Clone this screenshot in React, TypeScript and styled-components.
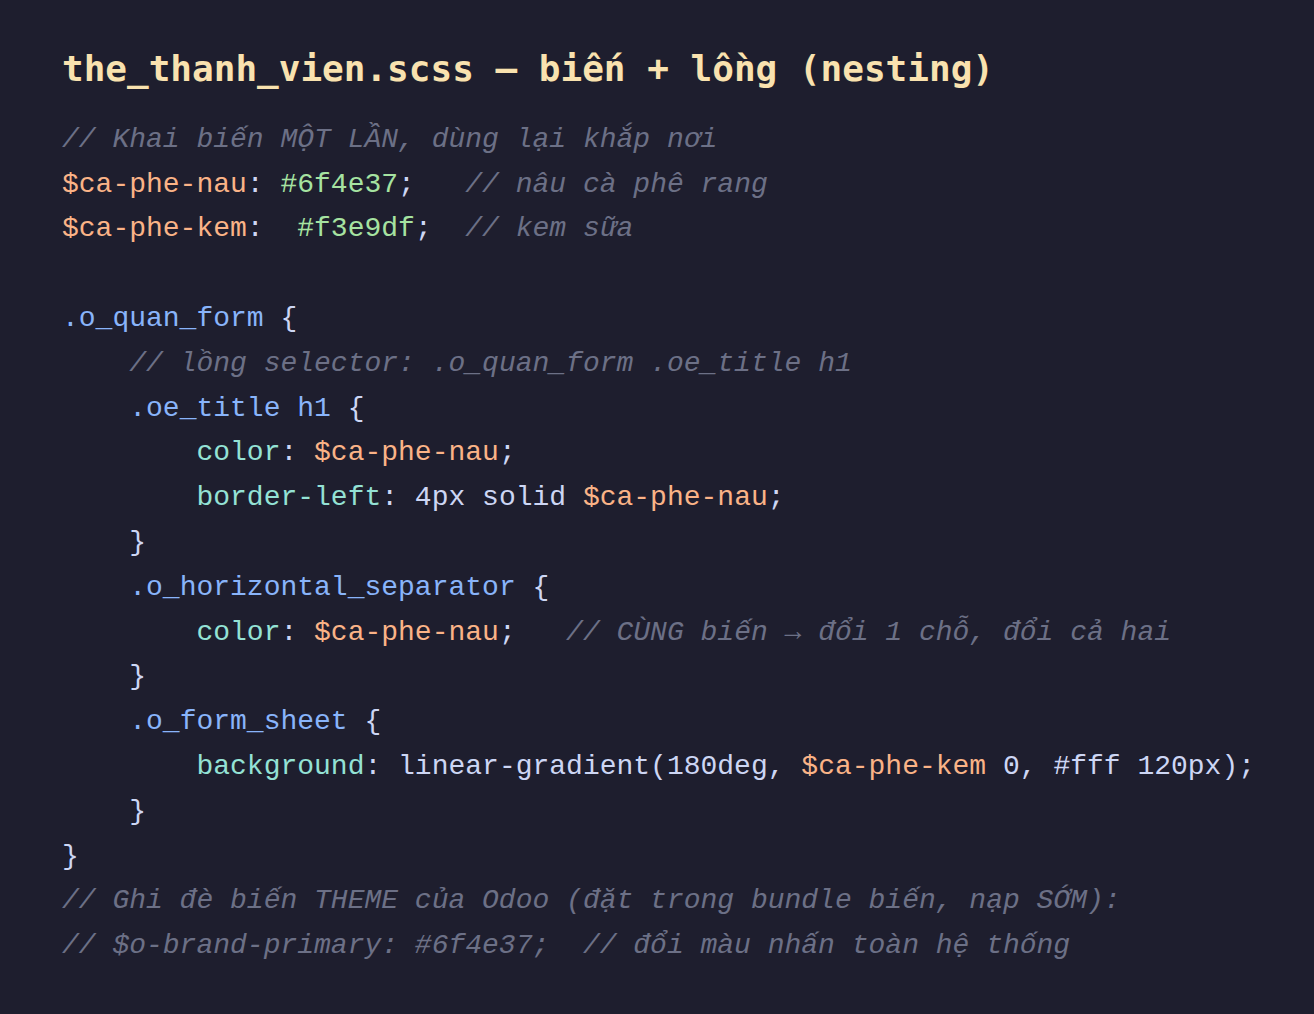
import React from "react";
import styled, { createGlobalStyle } from "styled-components";

const GlobalStyle = createGlobalStyle`
  html, body {
    margin: 0;
    padding: 0;
    background: #1e1e2e;
  }
  body {
    min-height: 1014px;
  }
`;

const Page = styled.main`
  box-sizing: border-box;
  min-height: 1014px;
  background: #1e1e2e;
  padding: 46px 62px 40px 62px;
`;

const Title = styled.h1`
  margin: 0 0 25px 0;
  font-family: "DejaVu Sans Mono", "Liberation Mono", monospace;
  font-weight: 700;
  font-size: 36px;
  line-height: 46.8px;
  color: #f9e2af;
  white-space: pre;
`;

const Code = styled.pre`
  margin: 0;
  font-family: "Courier New", "Nimbus Mono PS", "Nimbus Mono L", "FreeMono", "Liberation Mono", monospace;
  font-size: 28px;
  line-height: 44.8px;
  color: #cdd6f4;
  white-space: pre;
`;

const Line = styled.div`
  height: 44.8px;
`;

type Kind = "plain" | "comment" | "var" | "hex" | "sel" | "prop";

const colors: Record<Kind, string> = {
  plain: "#cdd6f4",
  comment: "#6c7086",
  var: "#fab387",
  hex: "#a6e3a1",
  sel: "#89b4fa",
  prop: "#94e2d5",
};

const Tok = styled.span<{ $kind: Kind }>`
  color: ${(p) => colors[p.$kind]};
  font-style: ${(p) => (p.$kind === "comment" ? "italic" : "normal")};
`;

type Seg = [Kind, string];

const lines: Seg[][] = [
  [["comment", "// Khai biến MỘT LẦN, dùng lại khắp nơi"]],
  [
    ["var", "$ca-phe-nau"],
    ["plain", ": "],
    ["hex", "#6f4e37"],
    ["plain", ";   "],
    ["comment", "// nâu cà phê rang"],
  ],
  [
    ["var", "$ca-phe-kem"],
    ["plain", ":  "],
    ["hex", "#f3e9df"],
    ["plain", ";  "],
    ["comment", "// kem sữa"],
  ],
  [],
  [
    ["sel", ".o_quan_form"],
    ["plain", " {"],
  ],
  [
    ["plain", "    "],
    ["comment", "// lồng selector: .o_quan_form .oe_title h1"],
  ],
  [
    ["plain", "    "],
    ["sel", ".oe_title h1"],
    ["plain", " {"],
  ],
  [
    ["plain", "        "],
    ["prop", "color"],
    ["plain", ": "],
    ["var", "$ca-phe-nau"],
    ["plain", ";"],
  ],
  [
    ["plain", "        "],
    ["prop", "border-left"],
    ["plain", ": 4px solid "],
    ["var", "$ca-phe-nau"],
    ["plain", ";"],
  ],
  [["plain", "    }"]],
  [
    ["plain", "    "],
    ["sel", ".o_horizontal_separator"],
    ["plain", " {"],
  ],
  [
    ["plain", "        "],
    ["prop", "color"],
    ["plain", ": "],
    ["var", "$ca-phe-nau"],
    ["plain", ";   "],
    ["comment", "// CÙNG biến → đổi 1 chỗ, đổi cả hai"],
  ],
  [["plain", "    }"]],
  [
    ["plain", "    "],
    ["sel", ".o_form_sheet"],
    ["plain", " {"],
  ],
  [
    ["plain", "        "],
    ["prop", "background"],
    ["plain", ": linear-gradient(180deg, "],
    ["var", "$ca-phe-kem"],
    ["plain", " 0, #fff 120px);"],
  ],
  [["plain", "    }"]],
  [["plain", "}"]],
  [["comment", "// Ghi đè biến THEME của Odoo (đặt trong bundle biến, nạp SỚM):"]],
  [["comment", "// $o-brand-primary: #6f4e37;  // đổi màu nhấn toàn hệ thống"]],
];

export default function App() {
  return (
    <>
      <GlobalStyle />
      <Page>
        <Title>the_thanh_vien.scss — biến + lồng (nesting)</Title>
        <Code>
          {lines.map((segs, i) => (
            <Line key={i}>
              {segs.map(([k, t], j) => (
                <Tok key={j} $kind={k}>
                  {t}
                </Tok>
              ))}
            </Line>
          ))}
        </Code>
      </Page>
    </>
  );
}
